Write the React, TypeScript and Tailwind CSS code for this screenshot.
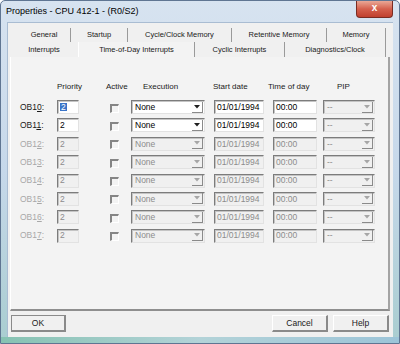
import React from "react";

const font = { fontFamily: '"Liberation Sans", Arial, sans-serif' };

const backTabs = [
  { label: "General", w: "w-[53px]" },
  { label: "Startup", w: "w-[57px]" },
  { label: "Cycle/Clock Memory", w: "w-[104px]" },
  { label: "Retentive Memory", w: "w-[95px]" },
  { label: "Memory", w: "w-[59px]" },
];

const frontTabs = [
  { label: "Interrupts", w: "w-[68px]", cls: "" },
  { label: "Time-of-Day Interrupts", w: "w-[117px]", cls: "border-l border-l-white border-r border-r-[#9a9a9a] bg-[#f3f3f3]" },
  { label: "Cyclic Interrupts", w: "w-[90px]", cls: "border-r border-r-[#9a9a9a]" },
  { label: "Diagnostics/Clock", w: "w-[101px]", cls: "border-r border-r-[#9a9a9a]" },
];

const rows = [10, 11, 12, 13, 14, 15, 16, 17].map((n) => ({ n, on: n < 12 }));

function Field({ w, on, children }: any) {
  return (
    <div
      className={`h-[14px] ${w} shrink-0 flex items-center pl-[2px] text-[8.5px] leading-none border border-t-[#7c7c7c] border-l-[#7c7c7c] border-b-[#e2e2e2] border-r-[#e2e2e2] shadow-[inset_1px_1px_0_#c4c4c4] ${
        on ? "bg-white text-black" : "bg-[#f0f0f0] text-[#8c8c8c]"
      }`}
    >
      {children}
    </div>
  );
}

function Combo({ w, on, text }: any) {
  return (
    <div
      className={`h-[14px] ${w} shrink-0 flex items-center border border-t-[#7c7c7c] border-l-[#7c7c7c] border-b-[#e2e2e2] border-r-[#e2e2e2] shadow-[inset_1px_1px_0_#c4c4c4] ${
        on ? "bg-white text-black" : "bg-[#f0f0f0] text-[#8c8c8c]"
      }`}
    >
      <span className="flex-1 pl-[3px] text-[8.5px] leading-none">{text}</span>
      <div className="w-[11px] h-[11px] mr-[1px] flex items-center justify-center border-r border-b border-r-[#8a8a8a] border-b-[#8a8a8a]">
        <svg width="6" height="4" viewBox="0 0 6 4">
          <path d="M0 0H6L3 3.5Z" fill={on ? "#202020" : "#a6a6a6"} />
        </svg>
      </div>
    </div>
  );
}

function Check() {
  return (
    <div className="w-[9px] h-[9px] shrink-0 border-t-[2px] border-l-[2px] border-t-[#858585] border-l-[#858585] border-b border-r border-b-white border-r-white" />
  );
}

function Btn({ label, def }: any) {
  return (
    <div
      className={`h-[17px] flex items-center justify-center text-[8.5px] text-[#202020] border-b-[2px] border-r-[2px] border-b-[#8a8a8a] border-r-[#8a8a8a] ${
        def
          ? "w-[55px] border-t border-l border-t-[#8a8a8a] border-l-[#8a8a8a]"
          : "w-[56px] border-t border-l border-t-white border-l-white"
      }`}
    >
      {label}
    </div>
  );
}

export default function App() {
  return (
    <div
      className="w-[400px] h-[344px] flex flex-col overflow-hidden border border-[#5f7592] rounded-t-[5px] bg-gradient-to-b from-[#d7e3f0] via-[#c6d8ea] to-[#a9cdd0]"
      style={font}
    >
      {/* TITLE BAR */}
      <div className="h-[21px] shrink-0 flex items-start">
        <span className="mt-[6px] ml-[5px] text-[9px] text-black leading-none">
          Properties - CPU 412-1 - (R0/S2)
        </span>
        <div className="ml-auto mr-[6px] w-[37px] h-[17px] rounded-b-[4px] border border-t-0 border-[#7a2c22] bg-gradient-to-b from-[#e9a796] via-[#d4604d] to-[#c0402e] flex items-center justify-center">
          <span className="text-white text-[10px] font-bold leading-none -mt-[2px]">x</span>
        </div>
      </div>

      {/* CLIENT */}
      <div className="mx-[6px] h-[315px] shrink-0 bg-[#f0f0f0] border-l border-t border-[#a9bcd2] flex flex-col">
        {/* TABS */}
        <div className="mt-[4px] ml-[2px] flex flex-col">
          <div className="flex h-[15px] pl-[8px]">
            {backTabs.map((t) => (
              <div
                key={t.label}
                className={`${t.w} shrink-0 flex items-center justify-center text-[7.5px] text-[#202020] border-r border-r-[#9a9a9a] mt-[1px]`}
              >
                {t.label}
              </div>
            ))}
          </div>
          <div className="flex h-[15px]">
            {frontTabs.map((t) => (
              <div
                key={t.label}
                className={`${t.w} ${t.cls} shrink-0 flex items-center justify-center text-[7.5px] text-[#202020]`}
              >
                {t.label}
              </div>
            ))}
          </div>
        </div>

        {/* PANEL */}
        <div className="ml-[2px] mr-[3px] h-[254px] shrink-0 bg-[#f3f3f3] border-l border-l-white border-r-[2px] border-r-[#a3a3a3] border-b-[2px] border-b-[#8e8e8e] pt-[23px] text-[#1a1a1a]">
          <div className="flex h-[14px] items-center pl-[46px] text-[8px] whitespace-nowrap">
            <span className="w-[49px] shrink-0">Priority</span>
            <span className="w-[37px] shrink-0">Active</span>
            <span className="w-[70px] shrink-0">Execution</span>
            <span className="w-[55px] shrink-0">Start date</span>
            <span className="w-[69px] shrink-0">Time of day</span>
            <span>PIP</span>
          </div>

          <div className="mt-[6px] flex flex-col gap-[4.4px]">
            {rows.map((r) => (
              <div key={r.n} className="flex items-center h-[14px] pl-[9px]">
                <span
                  className={`w-[37px] shrink-0 text-[8.5px] leading-none ${
                    r.on ? "text-[#1a1a1a]" : "text-[#a8a8a8]"
                  }`}
                >
                  OB1<span className="underline">{r.n % 10}</span>:
                </span>
                <Field w="w-[22px]" on={r.on}>
                  {r.n === 10 ? (
                    <span className="bg-[#3a74c8] text-white px-[1px]">2</span>
                  ) : (
                    "2"
                  )}
                </Field>
                <div className="ml-[31px] mt-[2px]">
                  <Check />
                </div>
                <div className="ml-[12px]">
                  <Combo w="w-[74px]" on={r.on} text="None" />
                </div>
                <div className="ml-[9px]">
                  <Field w="w-[50px]" on={r.on}>01/01/1994</Field>
                </div>
                <div className="ml-[9px]">
                  <Field w="w-[44px]" on={r.on}>00:00</Field>
                </div>
                <div className="ml-[6px]">
                  <Combo w="w-[52px]" on={false} text="--" />
                </div>
              </div>
            ))}
          </div>
        </div>

        {/* BUTTONS */}
        <div className="mt-[4px] flex ml-[3px] mr-[4px]">
          <Btn label="OK" def />
          <div className="flex-1" />
          <Btn label="Cancel" />
          <div className="w-[5px]" />
          <Btn label="Help" />
        </div>
      </div>

      {/* BOTTOM FRAME */}
      <div className="flex-1 bg-gradient-to-r from-[#86c2b2] via-[#b3d3d8] to-[#9cc4d8]" />
    </div>
  );
}
